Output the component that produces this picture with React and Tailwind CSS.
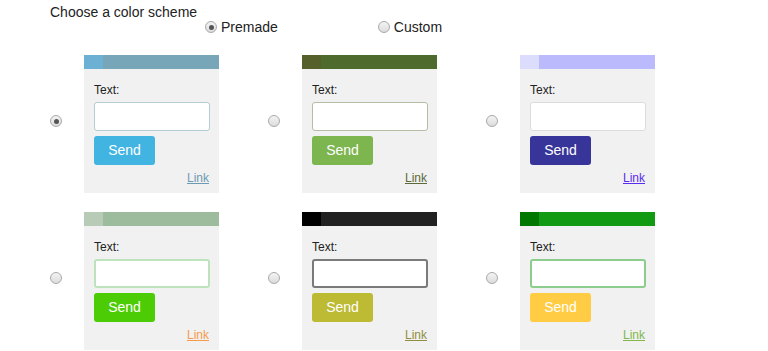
import React from "react";

const schemes = [
  { h1: "bg-[#6cb0d4]", h2: "bg-[#76a6b8]", inp: "border border-[#b3ccd6]", btn: "bg-[#41b4e1]", link: "text-[#6d9bb3]", checked: true },
  { h1: "bg-[#55602a]", h2: "bg-[#4e6a2c]", inp: "border border-[#b3bda4]", btn: "bg-[#7db54f]", link: "text-[#5c6a38]" },
  { h1: "bg-[#dcdcfc]", h2: "bg-[#babafc]", inp: "border border-[#dcdcdc]", btn: "bg-[#373599]", link: "text-[#5a2cf0]" },
  { h1: "bg-[#b7cbb7]", h2: "bg-[#9dbb9d]", inp: "border-2 border-[#bde3bd]", btn: "bg-[#4ccc04]", link: "text-[#f79a4a]" },
  { h1: "bg-[#000000]", h2: "bg-[#212121]", inp: "border-2 border-[#7a7a7a]", btn: "bg-[#bdba34]", link: "text-[#8f8f3f]" },
  { h1: "bg-[#007800]", h2: "bg-[#129a12]", inp: "border-2 border-[#8ccc8c]", btn: "bg-[#ffcc44]", link: "text-[#7fb84c]" },
];

function Radio({ checked }) {
  return (
    <span className="flex w-[12px] h-[12px] rounded-full border border-[#a9a9a9] bg-gradient-to-b from-[#f4f4f4] to-[#dcdcdc] items-center justify-center shrink-0">
      {checked && <span className="block w-[5px] h-[5px] rounded-full bg-[#555]" />}
    </span>
  );
}

function Card({ s }) {
  return (
    <div className="w-[135px] h-[138px] bg-[#f1f1f1] flex flex-col">
      <div className="flex h-[14px] shrink-0">
        <div className={`w-[19px] ${s.h1}`} />
        <div className={`flex-1 ${s.h2}`} />
      </div>
      <div className="px-[10px] pt-[14px] flex flex-col">
        <div className="text-[12px] leading-[14px] text-[#222]">Text:</div>
        <div className={`mt-[5px] h-[29px] w-[116px] rounded-[3px] bg-white ${s.inp}`} />
        <div className={`mt-[5px] h-[29px] w-[61px] rounded-[3px] ${s.btn} text-white text-[14px] flex items-center justify-center`}>
          Send
        </div>
        <div className="mt-[6px] flex justify-end">
          <span className={`text-[12px] leading-[14px] underline ${s.link}`}>Link</span>
        </div>
      </div>
    </div>
  );
}

export default function App() {
  return (
    <div className="w-[768px] h-[351px] bg-white overflow-hidden" style={{ fontFamily: '"Liberation Sans", Arial, sans-serif' }}>
      <div className="pl-[50px] pt-[5px] text-[14px] leading-[15px] text-[#222]">Choose a color scheme</div>
      <div className="flex items-center h-[14px] text-[14px] text-[#222]">
        <div className="ml-[205px] flex items-center gap-[4px]">
          <Radio checked />
          <span>Premade</span>
        </div>
        <div className="ml-[100px] flex items-center gap-[4px]">
          <Radio />
          <span>Custom</span>
        </div>
      </div>
      <div className="mt-[21px] pl-[50px] grid grid-cols-[218px_218px_218px] gap-y-[19px]">
        {schemes.map((s, i) => (
          <div key={i} className="flex items-center gap-[22px]">
            <div className="flex mb-[6px]">
              <Radio checked={s.checked} />
            </div>
            <Card s={s} />
          </div>
        ))}
      </div>
    </div>
  );
}
